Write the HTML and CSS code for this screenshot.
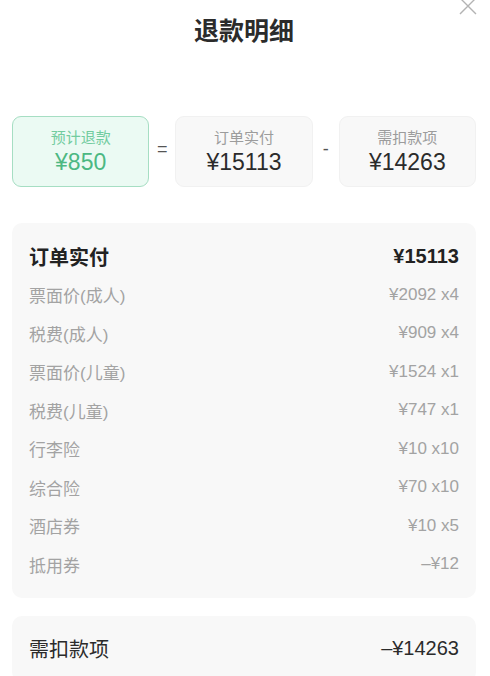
FILE: index.html
```html
<!DOCTYPE html>
<html lang="zh-CN">
<head>
  <meta charset="UTF-8">
  <meta name="viewport" content="width=device-width, initial-scale=1.0">
  <title>退款明细</title>
  <link rel="stylesheet" href="styles.css">
</head>
<body>
<div class="header">
  <h1>退款明细</h1>
  <svg class="close" width="18" height="18" viewBox="0 0 18 18">
    <path d="M1 1 L17 17 M17 1 L1 17" stroke="#b3b3b3" stroke-width="1.4" fill="none"/>
  </svg>
</div>

<div class="summary">
  <div class="box box-green">
    <div class="box-label">预计退款</div>
    <div class="box-value">¥850</div>
  </div>
  <div class="op">=</div>
  <div class="box">
    <div class="box-label">订单实付</div>
    <div class="box-value">¥15113</div>
  </div>
  <div class="op">-</div>
  <div class="box">
    <div class="box-label">需扣款项</div>
    <div class="box-value">¥14263</div>
  </div>
</div>

<div class="card">
  <div class="row row-head"><span>订单实付</span><span>¥15113</span></div>
  <div class="row"><span>票面价(成人)</span><span>¥2092 x4</span></div>
  <div class="row"><span>税费(成人)</span><span>¥909 x4</span></div>
  <div class="row"><span>票面价(儿童)</span><span>¥1524 x1</span></div>
  <div class="row"><span>税费(儿童)</span><span>¥747 x1</span></div>
  <div class="row"><span>行李险</span><span>¥10 x10</span></div>
  <div class="row"><span>综合险</span><span>¥70 x10</span></div>
  <div class="row"><span>酒店券</span><span>¥10 x5</span></div>
  <div class="row"><span>抵用券</span><span>–¥12</span></div>
</div>

<div class="card">
  <div class="row row-head row-light"><span>需扣款项</span><span>–¥14263</span></div>
</div>
</body>
</html>
```

FILE: styles.css
```css
body {
  margin: 0;
  padding: 0 14px 0 12px;
  font-family: "Liberation Sans", "Noto Sans CJK SC", sans-serif;
  color: #333;
  background: #fff;
  overflow: hidden;
}
.header {
  position: relative;
  height: 62px;
  text-align: center;
}
.header h1 {
  margin: 0;
  font-size: 25px;
  font-weight: bold;
  line-height: 62px;
  color: #2b2b2b;
}
.close {
  position: absolute;
  right: -1px;
  top: -3px;
}
.summary {
  display: flex;
  margin-top: 54px;
  height: 71px;
}
.box {
  flex: 1;
  box-sizing: border-box;
  border: 1px solid #f1f1f1;
  border-radius: 9px;
  background: #f8f8f8;
  text-align: center;
  padding-top: 11px;
}
.box-green {
  background: #ebfaf3;
  border-color: #a6dec3;
}
.box-label {
  font-size: 15px;
  line-height: 20px;
  color: #9c9c9c;
}
.box-value {
  font-size: 23px;
  line-height: 29px;
  color: #2b2b2b;
}
.box-green .box-label {
  color: #72cc9f;
}
.box-green .box-value {
  color: #4cb882;
}
.op {
  width: 26px;
  text-align: center;
  line-height: 66px;
  font-size: 18px;
  color: #555;
}
.card {
  margin-top: 36px;
  background: #f8f8f8;
  border-radius: 10px;
  padding: 14px 17px;
}
.card + .card {
  margin-top: 18px;
}
.row {
  display: flex;
  justify-content: space-between;
  align-items: center;
  height: 38.5px;
  font-size: 17px;
  color: #a3a3a3;
}
.row-head {
  font-size: 20px;
  color: #222;
  font-weight: bold;
}
.row-light {
  font-weight: normal;
  color: #2b2b2b;
}
```
